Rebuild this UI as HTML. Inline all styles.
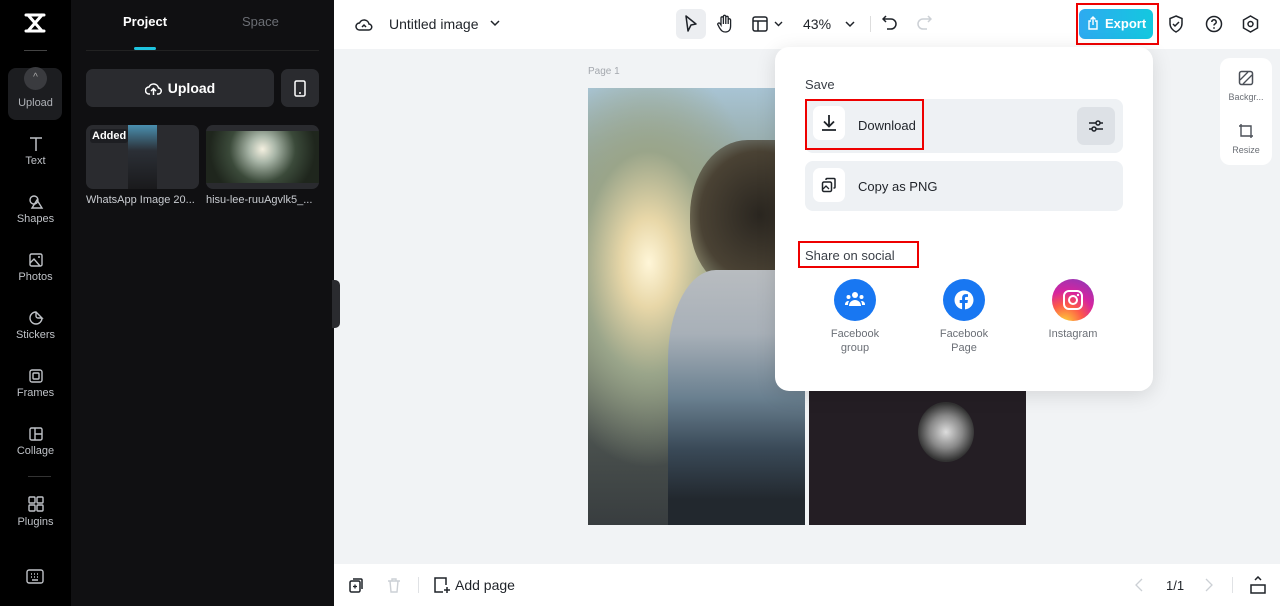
<!DOCTYPE html>
<html><head><meta charset="utf-8"><style>
*{box-sizing:border-box;margin:0;padding:0}
body{width:1280px;height:606px;overflow:hidden;font-family:"Liberation Sans",sans-serif;background:#f1f3f5;position:relative}
.abs{position:absolute}
.side{left:0;top:0;width:71px;height:606px;background:#000}
.panel{left:71px;top:0;width:263px;height:606px;background:#101012}
.nav{position:absolute;left:0;width:71px;text-align:center;color:#bfc2c7;font-size:11px}
.nav svg{display:block;margin:0 auto 3px}
.top{left:334px;top:0;width:946px;height:49px;background:#fff}
.bot{left:334px;top:564px;width:946px;height:42px;background:#fff}
.t{font-size:14px;color:#1f2329}
.pop{left:775px;top:47px;width:378px;height:344px;background:#fff;border-radius:14px;box-shadow:0 4px 20px rgba(0,0,0,.12)}
.row{position:absolute;left:30px;width:318px;height:54px;background:#eef1f4;border-radius:8px}
.ib{position:absolute;left:8px;top:7px;width:32px;height:34px;background:#fff;border-radius:7px}
.red{position:absolute;border:2px solid #e00}
.soc{position:absolute;top:232px;width:42px;height:42px;border-radius:50%}
.sl{position:absolute;top:280px;width:90px;text-align:center;font-size:11px;color:#6b6f76;line-height:14px}
</style></head><body>
<div class="abs side"></div>
<div class="abs panel"></div>
<!-- logo -->
<svg class="abs" style="left:23px;top:12px" width="24" height="22" viewBox="0 0 24 22"><path d="M3 3h18M3 19h18M5 3l14 16M19 3L5 19" fill="none" stroke="#fff" stroke-width="3" stroke-linecap="round" stroke-linejoin="round"/></svg>
<div class="abs" style="left:24px;top:50px;width:23px;height:1px;background:#444"></div>
<div class="abs" style="left:8px;top:68px;width:54px;height:52px;background:#1c1d20;border-radius:8px"></div>
<div class="abs" style="left:24px;top:67px;width:23px;height:23px;border-radius:50%;background:#3a3b3f;color:#aaa;font-size:10px;text-align:center;line-height:22px">^</div>
<div class="nav" style="top:97px;color:#aeb1b6">Upload</div>
<div class="nav" style="top:136px"><svg width="16" height="16" viewBox="0 0 16 16"><path d="M2 2h12M8 2v13" stroke="#bfc2c7" stroke-width="1.5" fill="none"/></svg>Text</div>
<div class="nav" style="top:194px"><svg width="16" height="16" viewBox="0 0 16 16"><circle cx="6" cy="6" r="4" stroke="#bfc2c7" stroke-width="1.4" fill="none"/><path d="M9 6l5 8H4z" stroke="#bfc2c7" stroke-width="1.4" fill="none"/></svg>Shapes</div>
<div class="nav" style="top:252px"><svg width="16" height="16" viewBox="0 0 16 16"><rect x="2" y="2" width="12" height="12" rx="1.5" stroke="#bfc2c7" stroke-width="1.4" fill="none"/><path d="M2 11l4-4 6 7" stroke="#bfc2c7" stroke-width="1.4" fill="none"/><circle cx="11" cy="5" r="1" fill="#bfc2c7"/></svg>Photos</div>
<div class="nav" style="top:310px"><svg width="16" height="16" viewBox="0 0 16 16"><path d="M14 8A6 6 0 1 1 8 2l6 6h-4a2 2 0 0 1-2-2V2" stroke="#bfc2c7" stroke-width="1.4" fill="none"/></svg>Stickers</div>
<div class="nav" style="top:368px"><svg width="16" height="16" viewBox="0 0 16 16"><rect x="2" y="2" width="12" height="12" rx="2" stroke="#bfc2c7" stroke-width="1.4" fill="none"/><rect x="5" y="5" width="6" height="6" rx="1" stroke="#bfc2c7" stroke-width="1.4" fill="none"/></svg>Frames</div>
<div class="nav" style="top:426px"><svg width="16" height="16" viewBox="0 0 16 16"><rect x="2" y="2" width="12" height="12" rx="1.5" stroke="#bfc2c7" stroke-width="1.4" fill="none"/><path d="M7 2v12M7 8h7" stroke="#bfc2c7" stroke-width="1.4"/></svg>Collage</div>
<div class="abs" style="left:28px;top:476px;width:23px;height:1px;background:#333"></div>
<div class="nav" style="top:495px"><svg width="18" height="18" viewBox="0 0 18 18"><g stroke="#bfc2c7" stroke-width="1.4" fill="none"><rect x="2" y="2" width="6" height="6" rx="1"/><rect x="10" y="2" width="6" height="6" rx="1"/><rect x="2" y="10" width="6" height="6" rx="1"/><rect x="10" y="10" width="6" height="6" rx="1"/></g></svg>Plugins</div>
<svg class="abs" style="left:26px;top:569px" width="18" height="15" viewBox="0 0 18 15"><rect x="1" y="1" width="16" height="13" rx="2" stroke="#bfc2c7" stroke-width="1.4" fill="none"/><path d="M5 5h1M8 5h1M11 5h1M5 8h1M8 8h1M11 8h1M6 11h6" stroke="#bfc2c7" stroke-width="1.4"/></svg>

<!-- panel -->
<div class="abs" style="left:123px;top:14px;color:#fff;font-size:13px;font-weight:bold">Project</div>
<div class="abs" style="left:242px;top:14px;color:#6b6e74;font-size:13px">Space</div>
<div class="abs" style="left:134px;top:47px;width:22px;height:3px;background:#1ec4df;border-radius:2px"></div>
<div class="abs" style="left:86px;top:50px;width:233px;height:1px;background:#222"></div>
<div class="abs" style="left:86px;top:69px;width:188px;height:38px;background:#2a2b2f;border-radius:7px;color:#fff;font-size:14px;font-weight:bold;text-align:center;line-height:38px"><svg style="vertical-align:-3px;margin-right:6px" width="17" height="15" viewBox="0 0 17 15"><path d="M5 13H4a3.5 3.5 0 0 1 0-7 5 5 0 0 1 9.5 1A3 3 0 0 1 13 13h-1M8.5 14V8M6 10l2.5-2.5L11 10" stroke="#fff" stroke-width="1.5" fill="none"/></svg>Upload</div>
<div class="abs" style="left:281px;top:69px;width:38px;height:38px;background:#2a2b2f;border-radius:7px"><svg style="position:absolute;left:13px;top:11px" width="12" height="17" viewBox="0 0 12 17"><rect x="1" y="1" width="10" height="15" rx="1.5" stroke="#fff" stroke-width="1.5" fill="none"/><path d="M5 13h2" stroke="#fff" stroke-width="1.5"/></svg></div>
<div class="abs" style="left:86px;top:125px;width:113px;height:64px;background:#2a2b2f;border-radius:7px;overflow:hidden">
 <div class="abs" style="left:42px;top:0;width:29px;height:64px;background:linear-gradient(#4a90b0,#2b2f36 40%,#1a1a1c)"></div>
 <div class="abs" style="left:4px;top:4px;padding:1px 2px;background:#1d1e22;color:#fff;font-size:11px;font-weight:bold;border-radius:3px">Added</div>
</div>
<div class="abs" style="left:206px;top:125px;width:113px;height:64px;background:#2a2b2f;border-radius:7px;overflow:hidden">
 <div class="abs" style="left:0;top:6px;width:113px;height:52px;background:radial-gradient(circle at 50% 35%,#f4f0e0 0,#a9b6a8 20%,#3b4a3a 50%,#1f261d 80%)"></div>
</div>
<div class="abs" style="left:86px;top:194px;color:#c9ccd1;font-size:11px">WhatsApp Image 20...</div>
<div class="abs" style="left:206px;top:194px;color:#c9ccd1;font-size:11px">hisu-lee-ruuAgvlk5_...</div>
<div class="abs" style="left:332px;top:280px;width:8px;height:48px;background:#2a2b2f;border-radius:0 5px 5px 0"></div>

<!-- top bar -->
<div class="abs top"></div>
<svg class="abs" style="left:355px;top:16px" width="18" height="16" viewBox="0 0 18 16"><path d="M5 14H4.5a3.5 3.5 0 0 1 0-7 5 5 0 0 1 9.5 1A3 3 0 0 1 13.5 14zM7 11l2-2 2 2" stroke="#1f2329" stroke-width="1.5" fill="none"/></svg>
<div class="abs t" style="left:389px;top:16px">Untitled image</div>
<svg class="abs" style="left:490px;top:20px" width="10" height="7"><path d="M1 1l4 4 4-4" stroke="#1f2329" stroke-width="1.5" fill="none"/></svg>
<div class="abs" style="left:676px;top:9px;width:30px;height:30px;background:#eceef1;border-radius:6px"></div>
<svg class="abs" style="left:684px;top:15px" width="14" height="18" viewBox="0 0 14 18"><path d="M2 1l10 8-5 1-3 6z" stroke="#1f2329" stroke-width="1.5" fill="none" stroke-linejoin="round"/></svg>
<svg class="abs" style="left:716px;top:14px" width="18" height="20" viewBox="0 0 18 20"><path d="M5 11V4a1.2 1.2 0 0 1 2.4 0v6V2.5a1.2 1.2 0 0 1 2.4 0V10V3.5a1.2 1.2 0 0 1 2.4 0V10V6a1.2 1.2 0 0 1 2.4 0v6c0 4-2 6-5 6s-4-1-6-4L2 11a1.2 1.2 0 0 1 2-1.5z" stroke="#1f2329" stroke-width="1.3" fill="none"/></svg>
<svg class="abs" style="left:752px;top:16px" width="16" height="16" viewBox="0 0 16 16"><rect x="1" y="1" width="14" height="14" rx="2" stroke="#1f2329" stroke-width="1.5" fill="none"/><path d="M1 5h14M6 5v10" stroke="#1f2329" stroke-width="1.5"/></svg>
<svg class="abs" style="left:774px;top:21px" width="9" height="6"><path d="M1 1l3.5 3.5L8 1" stroke="#1f2329" stroke-width="1.4" fill="none"/></svg>
<div class="abs t" style="left:803px;top:16px">43%</div>
<svg class="abs" style="left:845px;top:21px" width="10" height="7"><path d="M1 1l4 4 4-4" stroke="#1f2329" stroke-width="1.5" fill="none"/></svg>
<div class="abs" style="left:870px;top:16px;width:1px;height:16px;background:#ddd"></div>
<svg class="abs" style="left:882px;top:15px" width="16" height="17" viewBox="0 0 16 17"><path d="M4 1L1 4l3 3M1 4h8a5 5 0 0 1 0 10H5" stroke="#1f2329" stroke-width="1.5" fill="none"/></svg>
<svg class="abs" style="left:916px;top:15px" width="16" height="17" viewBox="0 0 16 17"><path d="M12 1l3 3-3 3M15 4H7a5 5 0 0 0 0 10h4" stroke="#ccd0d5" stroke-width="1.5" fill="none"/></svg>
<div class="abs" style="left:1079px;top:9px;width:74px;height:30px;border-radius:6px;background:linear-gradient(90deg,#2eaaf0,#13c8df);color:#fff;font-size:13px;font-weight:bold;line-height:30px;padding-left:26px">Export</div>
<svg class="abs" style="left:1087px;top:16px" width="12" height="14" viewBox="0 0 12 14"><path d="M4 5H2v8h8V5H8M6 9V1M3.5 3.5L6 1l2.5 2.5" stroke="#fff" stroke-width="1.4" fill="none"/></svg>
<div class="red" style="left:1076px;top:3px;width:83px;height:42px"></div>
<svg class="abs" style="left:1168px;top:15px" width="16" height="18" viewBox="0 0 16 18"><path d="M8 1l6 2.5v5c0 4-3 7-6 8.5-3-1.5-6-4.5-6-8.5v-5z M5 9l2 2 4-4" stroke="#1f2329" stroke-width="1.5" fill="none"/></svg>
<svg class="abs" style="left:1205px;top:15px" width="18" height="18" viewBox="0 0 18 18"><circle cx="9" cy="9" r="7.5" stroke="#1f2329" stroke-width="1.5" fill="none"/><path d="M6.8 7a2.2 2.2 0 1 1 3 2c-.6.3-.8.7-.8 1.5" stroke="#1f2329" stroke-width="1.5" fill="none"/><circle cx="9" cy="13" r=".9" fill="#1f2329"/></svg>
<svg class="abs" style="left:1242px;top:15px" width="17" height="18" viewBox="0 0 17 18"><path d="M8.5 1l7 4v8l-7 4-7-4V5z" stroke="#1f2329" stroke-width="1.5" fill="none"/><circle cx="8.5" cy="9" r="2.5" stroke="#1f2329" stroke-width="1.5" fill="none"/></svg>

<!-- canvas -->
<div class="abs" style="left:588px;top:66px;font-size:10px;color:#a4a8ae">Page 1</div>
<div class="abs" style="left:588px;top:88px;width:217px;height:437px;background:radial-gradient(ellipse at 28% 40%,#fff6d8 0,#e8d7a8 12%,#9aa58a 30%,transparent 55%),linear-gradient(180deg,#a8c4d4 0,#8c9a8a 25%,#6a7566 55%,#4f5652 75%,#383d3f 100%)"></div>
<div class="abs" style="left:690px;top:140px;width:115px;height:150px;border-radius:50% 0 0 45%;background:radial-gradient(ellipse at 60% 50%,#2a2620 0,#4a4234 60%,rgba(120,110,90,0) 100%)"></div>
<div class="abs" style="left:668px;top:270px;width:137px;height:255px;background:linear-gradient(180deg,#b8bcc0 0,#a8b0b8 25%,#6a8090 50%,#3a4a58 70%,#22282e 90%);border-radius:35% 0 0 0"></div>
<div class="abs" style="left:809px;top:391px;width:217px;height:134px;background:#241e24"></div>
<div class="abs" style="left:918px;top:402px;width:56px;height:60px;border-radius:50%;background:radial-gradient(circle,#ddd 0,#888 40%,#333 70%,#222 100%)"></div>

<!-- right tools -->
<div class="abs" style="left:1220px;top:58px;width:52px;height:107px;background:#fff;border-radius:10px"></div>
<svg class="abs" style="left:1238px;top:70px" width="16" height="16" viewBox="0 0 16 16"><rect x="1.5" y="1.5" width="13" height="13" rx="2" stroke="#4a4f57" stroke-width="1.5" fill="none"/><path d="M2 10L10 2M5 14l9-9" stroke="#4a4f57" stroke-width="1.3"/></svg>
<div class="abs" style="left:1222px;top:92px;width:48px;text-align:center;font-size:9px;color:#6b6f76">Backgr...</div>
<svg class="abs" style="left:1238px;top:123px" width="16" height="16" viewBox="0 0 16 16"><path d="M3 1v12h12M1 3h12v12" stroke="#4a4f57" stroke-width="1.4" fill="none"/></svg>
<div class="abs" style="left:1222px;top:145px;width:48px;text-align:center;font-size:9px;color:#6b6f76">Resize</div>

<!-- popup -->
<div class="abs pop">
 <div class="abs" style="left:30px;top:30px;font-size:13px;color:#3a3f47">Save</div>
 <div class="row" style="top:52px">
  <div class="ib"><svg style="position:absolute;left:7px;top:8px" width="18" height="18" viewBox="0 0 18 18"><path d="M9 1v11M4 7.5L9 12.5l5-5M2 16h14" stroke="#1f2329" stroke-width="1.8" fill="none"/></svg></div>
  <div class="abs t" style="left:53px;top:19px;font-size:13px">Download</div>
  <div class="abs" style="left:272px;top:8px;width:38px;height:38px;background:#dde1e6;border-radius:7px"><svg style="position:absolute;left:11px;top:11px" width="16" height="16" viewBox="0 0 16 16"><path d="M1 5h14M1 11h14" stroke="#1f2329" stroke-width="1.5"/><circle cx="10" cy="5" r="2" fill="#dde1e6" stroke="#1f2329" stroke-width="1.5"/><circle cx="6" cy="11" r="2" fill="#dde1e6" stroke="#1f2329" stroke-width="1.5"/></svg></div>
 </div>
 <div class="row" style="top:114px;height:50px">
  <div class="ib"><svg style="position:absolute;left:8px;top:9px" width="16" height="16" viewBox="0 0 16 16"><rect x="1.5" y="5" width="9" height="9.5" rx="1.5" stroke="#1f2329" stroke-width="1.5" fill="none"/><path d="M5 3V2.5A1 1 0 0 1 6 1.5h7a1 1 0 0 1 1 1V10a1 1 0 0 1-1 1h-.5" stroke="#1f2329" stroke-width="1.5" fill="none"/><path d="M2 12l3-3 3 3" stroke="#1f2329" stroke-width="1.3" fill="none"/></svg></div>
  <div class="abs t" style="left:53px;top:18px;font-size:13px">Copy as PNG</div>
 </div>
 <div class="abs" style="left:30px;top:201px;font-size:13px;color:#3a3f47">Share on social</div>
 <div class="soc" style="left:59px;background:#1877f2"><svg style="position:absolute;left:10px;top:11px" width="22" height="18" viewBox="0 0 22 18"><circle cx="11" cy="5" r="3" fill="#fff"/><circle cx="4.5" cy="7" r="2" fill="#fff"/><circle cx="17.5" cy="7" r="2" fill="#fff"/><path d="M5 16a6 6 0 0 1 12 0z M1 15a3.5 3.5 0 0 1 4-4 7 7 0 0 0-1 4zM21 15a3.5 3.5 0 0 0-4-4 7 7 0 0 1 1 4z" fill="#fff"/></svg></div>
 <div class="soc" style="left:168px;background:#1877f2"><svg style="position:absolute;left:11px;top:11px" width="20" height="20" viewBox="0 0 20 20"><circle cx="10" cy="10" r="9.5" fill="#fff"/><path d="M11 20v-7h2.5l.4-3H11V8.3c0-.8.3-1.4 1.4-1.4H14V4.2c-.3 0-1.2-.1-2.2-.1-2.2 0-3.7 1.3-3.7 3.8V10H5.7v3h2.4v7z" fill="#1877f2"/></svg></div>
 <div class="soc" style="left:277px;background:radial-gradient(circle at 30% 105%,#fdd835 0,#fd5949 35%,#d6249f 60%,#8a3ab9 95%)"><svg style="position:absolute;left:10px;top:10px" width="22" height="22" viewBox="0 0 22 22"><rect x="2" y="2" width="18" height="18" rx="5" stroke="#fff" stroke-width="2" fill="none"/><circle cx="11" cy="11" r="4" stroke="#fff" stroke-width="2" fill="none"/><circle cx="16" cy="6" r="1.2" fill="#fff"/></svg></div>
 <div class="sl" style="left:35px">Facebook<br>group</div>
 <div class="sl" style="left:144px">Facebook<br>Page</div>
 <div class="sl" style="left:253px">Instagram</div>
</div>
<div class="red" style="left:805px;top:99px;width:119px;height:51px"></div>
<div class="red" style="left:798px;top:241px;width:121px;height:27px"></div>

<!-- bottom -->
<div class="abs bot"></div>
<svg class="abs" style="left:348px;top:577px" width="16" height="16" viewBox="0 0 16 16"><rect x="2" y="4" width="10" height="11" rx="1.5" stroke="#1f2329" stroke-width="1.5" fill="none"/><path d="M5 2h8a1 1 0 0 1 1 1v9" stroke="#1f2329" stroke-width="1.5" fill="none"/><path d="M7 7.5v4M5 9.5h4" stroke="#1f2329" stroke-width="1.3"/></svg>
<svg class="abs" style="left:387px;top:577px" width="14" height="16" viewBox="0 0 14 16"><path d="M1 4h12M5 4V2h4v2M3 4l1 11h6l1-11" stroke="#ccd0d5" stroke-width="1.4" fill="none"/></svg>
<div class="abs" style="left:418px;top:577px;width:1px;height:16px;background:#e0e2e5"></div>
<svg class="abs" style="left:433px;top:576px" width="18" height="18" viewBox="0 0 18 18"><path d="M13 9V2H2v14h8M14 11v6M11 14h6" stroke="#1f2329" stroke-width="1.5" fill="none"/></svg>
<div class="abs t" style="left:455px;top:577px">Add page</div>
<svg class="abs" style="left:1135px;top:578px" width="8" height="14"><path d="M7 1L1 7l6 6" stroke="#ccd0d5" stroke-width="1.3" fill="none"/></svg>
<div class="abs" style="left:1166px;top:578px;font-size:13px;color:#1f2329">1/1</div>
<svg class="abs" style="left:1205px;top:578px" width="8" height="14"><path d="M1 1l6 6-6 6" stroke="#ccd0d5" stroke-width="1.3" fill="none"/></svg>
<div class="abs" style="left:1232px;top:577px;width:1px;height:16px;background:#e0e2e5"></div>
<svg class="abs" style="left:1249px;top:576px" width="18" height="18" viewBox="0 0 18 18"><path d="M2 9h14v8H2zM6 4l3-3 3 3" stroke="#1f2329" stroke-width="1.5" fill="none"/></svg>
</body></html>
